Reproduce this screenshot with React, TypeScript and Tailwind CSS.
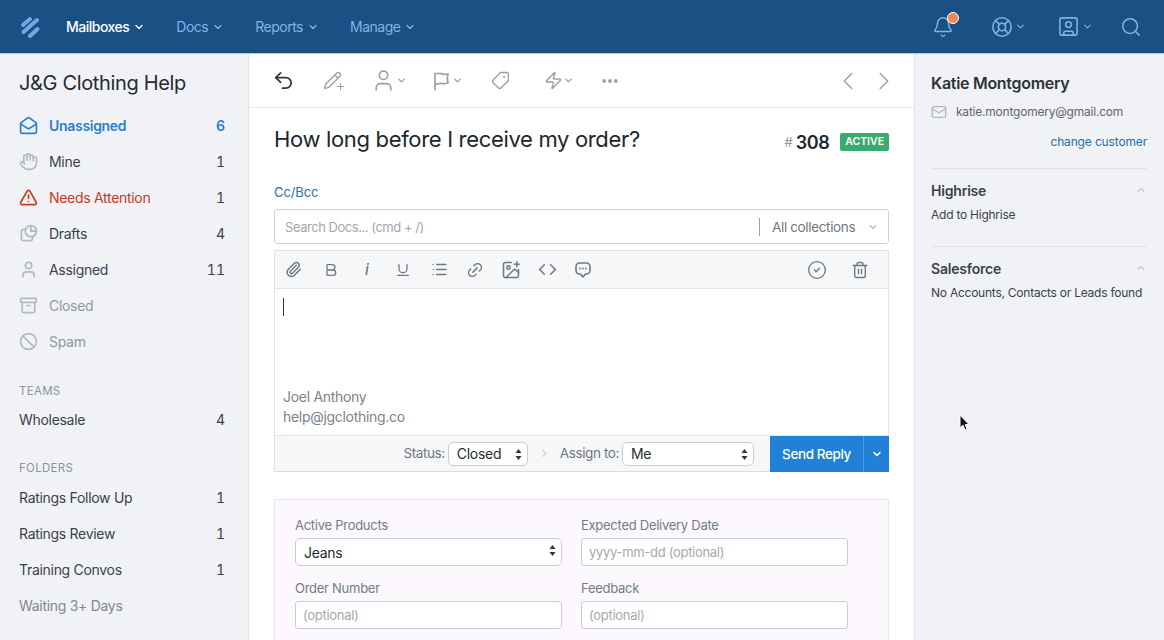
import type { ReactNode } from "react";
import {
  Bold,
  ChevronDown,
  ChevronLeft,
  ChevronRight,
  ChevronUp,
  CircleCheck,
  Code,
  Ellipsis,
  LifeBuoy,
  Link2,
  List,
  Mail,
  MailOpen,
  Pencil,
  Search,
  Tag,
  Trash2,
  TriangleAlert,
  Underline,
  Undo2,
  User,
  Hand,
  Ban,
  Archive,
  Bell,
  Paperclip,
  ImagePlus,
  SquareUser,
  Zap,
  Plus,
} from "lucide-react";

const font = { fontFamily: "Inter, 'Noto Sans', sans-serif" };

function DraftsIcon({ className }: { className?: string }) {
  return (
    <svg width="19" height="19" viewBox="0 0 24 24" fill="none" stroke="currentColor" strokeWidth="2.2" className={className}>
      <path d="M9 7H5a2 2 0 0 0-2 2v10a2 2 0 0 0 2 2h10a2 2 0 0 0 2-2v-3" />
      <circle cx="15" cy="9" r="7" />
      <path d="M15 2v7h7" />
    </svg>
  );
}

const mainRows = [
  { icon: MailOpen, label: "Unassigned", count: "6", row: "text-[#2a80c9] font-semibold", iconCls: "text-[#2a80c9]" },
  { icon: Hand, label: "Mine", count: "1", row: "text-[#39424c]", iconCls: "text-[#b3bac2]" },
  { icon: TriangleAlert, label: "Needs Attention", count: "1", row: "text-[#c9391f]", iconCls: "text-[#c9391f]", countCls: "text-[#39424c]" },
  { icon: DraftsIcon, label: "Drafts", count: "4", row: "text-[#39424c]", iconCls: "text-[#b3bac2]" },
  { icon: User, label: "Assigned", count: "11", row: "text-[#39424c]", iconCls: "text-[#b3bac2]" },
  { icon: Archive, label: "Closed", count: "", row: "text-[#8f98a3]", iconCls: "text-[#b3bac2]" },
  { icon: Ban, label: "Spam", count: "", row: "text-[#8f98a3]", iconCls: "text-[#b3bac2]" },
];

const folders = [
  { label: "Ratings Follow Up", count: "1", cls: "text-[#39424c]" },
  { label: "Ratings Review", count: "1", cls: "text-[#39424c]" },
  { label: "Training Convos", count: "1", cls: "text-[#39424c]" },
  { label: "Waiting 3+ Days", count: "", cls: "text-[#7f8893]" },
];

function NavItem({ label, active }: { label: string; active?: boolean }) {
  return (
    <div className={`flex items-center gap-[4px] text-[14px] tracking-[-0.5px] ${active ? "text-white font-medium" : "text-[#7fb4e3]"}`}>
      {label}
      <ChevronDown size={12} strokeWidth={2.5} />
    </div>
  );
}

function Logo() {
  return (
    <svg width="20" height="22" viewBox="0 0 20 22" fill="none" stroke="#6fabe0" strokeWidth="4" strokeLinecap="round">
      <path d="M3 9 L10 3" />
      <path d="M3.5 16 L17 4" />
      <path d="M10 20 L17.5 13" />
    </svg>
  );
}

function SideRow({ children, count, cls, countCls }: { children: ReactNode; count?: string; cls?: string; countCls?: string }) {
  return (
    <div className={`h-9 flex items-center justify-between text-[14px] tracking-[-0.3px] ${cls}`}>
      <div className="flex items-center">{children}</div>
      <span className={`tabular-nums tracking-normal ${countCls ?? ""}`}>{count}</span>
    </div>
  );
}

function Sidebar() {
  return (
    <aside className="w-[249px] shrink-0 bg-[#f1f2f5] border-r border-[#dfe2e6] pl-[19px] pr-[23px]">
      <h1 className="mt-[16px] h-[26px] text-[20px] leading-[26px] text-[#252b32] tracking-[-0.35px]">J&amp;G Clothing Help</h1>
      <div className="mt-[11px]">
        {mainRows.map((r) => (
          <SideRow key={r.label} count={r.count} cls={r.row} countCls={r.countCls}>
            <r.icon size={19} strokeWidth={2.1} className={`mr-[11px] ${r.iconCls}`} />
            {r.label}
          </SideRow>
        ))}
      </div>
      <div className="mt-[24px] text-[11.5px] leading-4 tracking-[0.3px] text-[#8b949e]">TEAMS</div>
      <div className="mt-[2px]">
        <SideRow count="4" cls="text-[#39424c]">Wholesale</SideRow>
      </div>
      <div className="mt-[23px] text-[11.5px] leading-4 tracking-[0.3px] text-[#8b949e]">FOLDERS</div>
      <div className="mt-[3px]">
        {folders.map((f) => (
          <SideRow key={f.label} count={f.count} cls={f.cls} countCls="text-[#39424c]">{f.label}</SideRow>
        ))}
      </div>
    </aside>
  );
}

function ToolChevron() {
  return <ChevronDown size={11} strokeWidth={2.5} className="text-[#8f969e]" />;
}

function FlagIcon() {
  return (
    <svg width="20" height="20" viewBox="0 0 20 20" fill="none" stroke="currentColor" strokeWidth="1.7" strokeLinejoin="round" strokeLinecap="round">
      <path d="M3 18.5V2.5h6c1.5 1 3.5 1.2 7 .5-1 3-1 6 0 9-3.5 1-6 .8-7.5.2-1.5.6-3.5 1-5.5.8" />
    </svg>
  );
}

function Toolbar() {
  return (
    <div className="h-[54px] shrink-0 flex items-center justify-between border-b border-[#e8e8ee] pl-[23px] pr-[15px] text-[#9aa1a9]">
      <div className="flex items-center">
        <Undo2 size={23} strokeWidth={1.8} className="text-[#2f363d]" />
        <div className="relative ml-[28px]">
          <Pencil size={19} strokeWidth={1.8} />
          <Plus size={11} strokeWidth={2.2} className="absolute -right-[4px] -bottom-[2px]" />
        </div>
        <div className="flex items-center ml-[29px]">
          <User size={25} strokeWidth={1.6} />
          <ToolChevron />
        </div>
        <div className="flex items-center ml-[25px]">
          <FlagIcon />
          <ToolChevron />
        </div>
        <Tag size={19} strokeWidth={1.8} className="ml-[28px] rotate-90" />
        <div className="flex items-center ml-[34px]">
          <Zap size={19} strokeWidth={1.8} />
          <ToolChevron />
        </div>
        <Ellipsis size={20} strokeWidth={2.6} className="ml-[26px]" />
      </div>
      <div className="flex items-center gap-[6px]">
        <ChevronLeft size={30} strokeWidth={1.2} />
        <ChevronRight size={30} strokeWidth={1.2} />
      </div>
    </div>
  );
}

function Updown() {
  return (
    <svg width="7" height="11" viewBox="0 0 7 11" fill="#333" className="absolute right-[6px] top-[7px] pointer-events-none">
      <path d="M3.5 0 L6.5 4 H0.5 Z" />
      <path d="M3.5 11 L6.5 7 H0.5 Z" />
    </svg>
  );
}

function NativeSelect({ value, cls }: { value: string; cls: string }) {
  return (
    <div className={`relative ${cls}`}>
      <select
        defaultValue={value}
        className="appearance-none w-full h-full bg-white border border-[#c9cdd2] rounded-[5px] pl-[8px] text-[14px] tracking-[-0.3px] text-[#262c33] outline-none"
      >
        <option>{value}</option>
      </select>
      <Updown />
    </div>
  );
}

function BubbleIcon({ className }: { className?: string }) {
  return (
    <svg width="18" height="18" viewBox="0 0 18 18" fill="none" stroke="currentColor" strokeWidth="1.6" strokeLinejoin="round" className={className}>
      <path d="M5.5 2h7A3.5 3.5 0 0 1 16 5.5v4a3.5 3.5 0 0 1-3.5 3.5h-1L9 16l-2.5-3h-1A3.5 3.5 0 0 1 2 9.5v-4A3.5 3.5 0 0 1 5.5 2Z" />
      <path d="M6 7.5h.01M9 7.5h.01M12 7.5h.01" strokeWidth="1.8" strokeLinecap="round" />
    </svg>
  );
}

function EditorIcons() {
  const cls = "text-[#6f7780]";
  const cell = "w-[36px] flex items-center justify-center";
  return (
    <div className="h-[38px] bg-[#f6f7f8] border-b border-[#e3e5e8] flex items-center justify-between pr-[19px]">
      <div className="flex items-center">
        <div className="w-[37px] flex items-center justify-center"><Paperclip size={17} strokeWidth={2} className={cls} /></div>
        <div className="w-[37px] flex items-center justify-center"><Bold size={16} strokeWidth={1.9} className={cls} /></div>
        <div className={cell}><span className="text-[15px] leading-none font-medium italic text-[#6f7780]">i</span></div>
        <div className={cell}><Underline size={16} strokeWidth={1.9} className={cls} /></div>
        <div className={cell}><List size={17} strokeWidth={1.9} className={cls} /></div>
        <div className={cell}><Link2 size={18} strokeWidth={1.9} className={`${cls} -rotate-45`} /></div>
        <div className={cell}><ImagePlus size={20} strokeWidth={1.8} className={cls} /></div>
        <div className={cell}><Code size={19} strokeWidth={1.9} className={cls} /></div>
        <div className={cell}><BubbleIcon className={cls} /></div>
      </div>
      <div className="flex items-center gap-[24px]">
        <CircleCheck size={20} strokeWidth={1.6} className={cls} />
        <Trash2 size={18} strokeWidth={1.8} className={cls} />
      </div>
    </div>
  );
}

function Field({ label, children }: { label: string; children: ReactNode }) {
  return (
    <div>
      <div className="h-[18px] text-[13px] leading-[18px] tracking-[-0.27px] text-[#737b85]">{label}</div>
      <div className="mt-[4px]">{children}</div>
    </div>
  );
}

function TextBox({ placeholder }: { placeholder: string }) {
  return (
    <input
      placeholder={placeholder}
      className="block w-full h-[28px] bg-white border border-[#c9cdd2] rounded-[3px] pl-[7px] pr-[7px] text-[13px] tracking-[-0.3px] placeholder:text-[#a3a9b1] outline-none"
    />
  );
}

function Main() {
  return (
    <main className="flex-1 min-w-0 flex flex-col bg-white">
      <Toolbar />
      <div className="px-[25px]">
        <div className="flex items-start justify-between h-[47px]">
          <h2 className="mt-[16px] text-[22px] leading-[30px] tracking-[-0.33px] text-[#20262d]">How long before I receive my order?</h2>
          <div className="flex items-center mt-[24px] h-[20px]">
            <span className="text-[13px] text-[#8f969e] mr-[3px] mt-[2px]">#</span>
            <span className="text-[18px] font-semibold tracking-[-0.5px] text-[#20262d]">308</span>
            <span className="ml-[11px] h-[18px] px-[5px] bg-[#39ab6e] rounded-[2px] text-white text-[10.5px] leading-[18px] font-semibold">ACTIVE</span>
          </div>
        </div>
        <div className="mt-[28px] h-[18px] text-[13px] leading-[18px] tracking-[-0.1px] text-[#2a6ea8]">Cc/Bcc</div>
        <div className="mt-[8px] h-[35px] flex items-center border border-[#cdd1d6] rounded-[3px] pl-[10px] pr-[9px]">
          <div className="flex-1 pt-[2px] text-[13px] tracking-[-0.46px] text-[#a1a7af]">Search Docs... (cmd + /)</div>
          <div className="h-[18px] w-px bg-[#9aa1a9] mr-[12px]" />
          <div className="w-[107px] pt-[1px] flex items-center justify-between text-[13.5px] tracking-[-0.35px] text-[#6f7780]">
            All collections
            <ChevronDown size={12} strokeWidth={2.2} className="text-[#b3bac2]" />
          </div>
        </div>
        <div className="mt-[6px] border border-[#dfe2e6] border-b-[#d9dde2]">
          <EditorIcons />
          <div className="h-[146px] flex flex-col bg-white pl-[8px]">
            <div className="mt-[9px] w-px h-[18px] bg-[#333]" />
            <div className="mt-[71px] text-[14px] leading-[20px] tracking-[-0.3px] text-[#7b838c]">Joel Anthony</div>
            <div className="text-[14px] leading-[20px] tracking-[-0.3px] text-[#7b838c]">help@jgclothing.co</div>
          </div>
          <div className="h-[36px] bg-[#f6f7f8] border-t border-[#e3e5e8] flex items-center justify-end text-[13.5px] tracking-[-0.4px] text-[#6f7780]">
            <span>Status:</span>
            <NativeSelect value="Closed" cls="ml-[3px] w-[80px] h-[24px]" />
            <ChevronRight size={11} strokeWidth={2.2} className="ml-[11px] mr-[10px] text-[#b9bfc6]" />
            <span>Assign to:</span>
            <NativeSelect value="Me" cls="ml-[3px] w-[132px] h-[24px]" />
            <div className="ml-[16px] -mr-px -mb-px h-[36px] w-[119px] flex bg-[#2081d6] text-white">
              <div className="flex-1 flex items-center justify-center text-[13.5px] font-medium tracking-[-0.4px]">Send Reply</div>
              <div className="w-[26px] flex items-center justify-center border-l border-[#4f9ae0]">
                <ChevronDown size={12} strokeWidth={3} />
              </div>
            </div>
          </div>
        </div>
        <div className="mt-[27px] border border-[#e8e6ee] bg-[#fcf8fe] px-[20px] pt-[16px] pb-[24px]">
          <div className="grid grid-cols-[267px_267px] gap-x-[19px] gap-y-[13px]">
            <Field label="Active Products">
              <NativeSelect value="Jeans" cls="w-full h-[28px]" />
            </Field>
            <Field label="Expected Delivery Date">
              <TextBox placeholder="yyyy-mm-dd (optional)" />
            </Field>
            <Field label="Order Number">
              <TextBox placeholder="(optional)" />
            </Field>
            <Field label="Feedback">
              <TextBox placeholder="(optional)" />
            </Field>
          </div>
        </div>
      </div>
    </main>
  );
}

function AppPanel({ title, body }: { title: string; body: string }) {
  return (
    <div className="border-t border-[#dfe2e6] pt-[12px] h-[78px]">
      <div className="flex items-center justify-between h-[18px]">
        <span className="text-[14px] font-semibold tracking-[-0.2px] text-[#39424c]">{title}</span>
        <ChevronUp size={12} strokeWidth={2.2} className="text-[#c4c9cf]" />
      </div>
      <div className="mt-[7px] whitespace-nowrap text-[12px] leading-[18px] tracking-[-0.24px] text-[#39424c]">{body}</div>
    </div>
  );
}

function CustomerPanel() {
  return (
    <aside className="w-[250px] shrink-0 bg-[#f1f2f5] border-l border-[#dfe2e6] pl-[16px] pr-[17px]">
      <div className="mt-[18px] h-[22px] text-[16px] leading-[22px] font-semibold tracking-[-0.3px] text-[#2c333a]">Katie Montgomery</div>
      <div className="mt-[8px] flex items-center h-[20px]">
        <Mail size={16} strokeWidth={2} className="text-[#b3bac2] mr-[9px]" />
        <span className="text-[12px] tracking-[-0.22px] text-[#5f6770]">katie.montgomery@gmail.com</span>
      </div>
      <div className="mt-[11px] h-[18px] text-right text-[12px] leading-[18px] tracking-[-0.15px] text-[#2a6ea8]">change customer</div>
      <div className="mt-[17px]">
        <AppPanel title="Highrise" body="Add to Highrise" />
        <AppPanel title="Salesforce" body="No Accounts, Contacts or Leads found" />
      </div>
    </aside>
  );
}

export default function App() {
  return (
    <div style={font} className="w-[1164px] h-[640px] overflow-hidden flex flex-col relative">
      <header className="h-[54px] shrink-0 bg-[#1a5083] border-b border-[#a7cdee] flex items-center justify-between pl-[20px] pr-[22px]">
        <div className="flex items-center">
          <Logo />
          <div className="flex items-center gap-[31px] ml-[26px]">
            <NavItem label="Mailboxes" active />
            <NavItem label="Docs" />
            <NavItem label="Reports" />
            <NavItem label="Manage" />
          </div>
        </div>
        <div className="flex items-center text-[#7fb4e3]">
          <div className="relative">
            <Bell size={22} strokeWidth={1.6} />
            <span className="absolute -top-[4px] -right-[5px] w-[12px] h-[12px] rounded-full bg-[#ee8a5a] border border-white" />
          </div>
          <div className="flex items-center gap-[2px] ml-[37px]">
            <LifeBuoy size={22} strokeWidth={1.7} />
            <ChevronDown size={11} strokeWidth={2.5} />
          </div>
          <div className="flex items-center gap-[2px] ml-[31px]">
            <SquareUser size={23} strokeWidth={1.6} />
            <ChevronDown size={11} strokeWidth={2.5} />
          </div>
          <Search size={22} strokeWidth={1.7} className="ml-[27px]" />
        </div>
      </header>
      <div className="flex-1 min-h-0 flex">
        <Sidebar />
        <Main />
        <CustomerPanel />
      </div>
      <svg width="12" height="18" viewBox="0 0 12 18" className="absolute left-[959px] top-[414px]">
        <path d="M1 1 V14 L4 11.2 L6 16 L8 15 L6.2 10.6 H10 Z" fill="#111" stroke="#fff" strokeWidth="1" />
      </svg>
    </div>
  );
}
